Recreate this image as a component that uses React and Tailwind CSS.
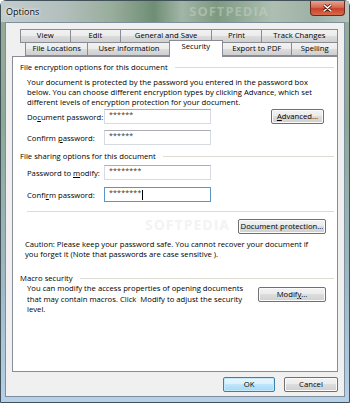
import clsx from "clsx";

const TAB_BASE =
  "flex items-center justify-center -ml-px border border-[#898c95] text-[7.7px] leading-none text-black bg-[linear-gradient(#f2f2f2,#ebebeb_50%,#dddddd_50%,#cfcfcf)]";

function Tab({ label, width, selected }) {
  if (selected) {
    return <div
      className="relative z-10 -mt-[2px] -ml-[2px] -mr-px flex h-[17px] items-start justify-center border border-b-0 border-[#898c95] bg-white pt-[2px] text-[7.7px] leading-none text-black"
      style={{ width }}
    >
        {label}
      </div>;
  }
  return <div className={clsx(TAB_BASE, "h-[14px]")} style={{ width }}>
      {label}
    </div>;
}

function Btn({ children, className, primary }) {
  return <div
    className={clsx(
      "relative z-10 flex h-[15px] items-center justify-center rounded-[2px] border text-[7.7px] leading-none text-black",
      primary
        ? "border-[#3c7fb1] bg-[linear-gradient(#eaf6fd,#d9f0fc_50%,#bee6fd_50%,#a7d9f5)] shadow-[inset_0_0_0_1px_#c9e8fa]"
        : "border-[#707070] bg-[linear-gradient(#f2f2f2,#ebebeb_50%,#dddddd_50%,#cfcfcf)] shadow-[inset_0_0_0_1px_#fbfbfb]",
      className
    )}
  >
      {children}
    </div>;
}

function GroupHeader({ children }) {
  return <div className="flex h-[10px] items-center pl-[7px] pr-[3px]">
      <span className="whitespace-nowrap leading-[10px]">{children}</span>
      <div className="ml-[7px] h-px flex-1 bg-[#dcdcd2]" />
    </div>;
}

function PasswordField({ label, value, focused }) {
  return <div className="flex h-[15px] items-center">
      <span className="w-[91px] shrink-0 pl-[14px] whitespace-nowrap leading-[10px]">{label}</span>
      <div
        className={clsx(
          "flex h-[15px] w-[107px] items-start border bg-white pl-[4px] pt-[1px]",
          focused ? "border-[#5b95c8]" : "border-[#d6dbe2] border-t-[#abadb3]"
        )}
      >
        <span className="text-[7px] leading-[7px] tracking-[0.2px] text-[#333]">{value}</span>
        {focused && <span className="ml-px mt-[1px] h-[10px] w-px bg-black" />}
      </div>
    </div>;
}

function Key({ children }) {
  return <span className="underline underline-offset-[1px]">{children}</span>;
}

export default function App() {
  return <div className="h-[403px] w-[350px] overflow-hidden font-['Open_Sans','Noto_Sans',sans-serif] text-[7.7px] text-black">
      <div className="flex h-full flex-col rounded-t-[6px] border border-[#41515a] bg-[linear-gradient(#97ac9a,#8ea896_30%,#9fb8c4_70%,#b7d0e8)]">
        {/* title bar */}
        <div className="relative flex h-[21px] shrink-0 items-center bg-[linear-gradient(to_right,#c3cdce_0%,#b2bfbc_18%,#98ad9b_32%,#6f8e74_44%,#a2b6a6_52%,#7d9a80_62%,#aebfb2_78%,#9db1a4_90%,#b7c4be_100%)] pl-[5px]">
          <span className="text-[9px] leading-none text-black [text-shadow:0_0_4px_#ffffff,0_0_2px_#ffffff]">Options</span>
          <span className="ml-[150px] text-[13px] font-bold tracking-[1px] text-[#c7d3c9]/50">SOFTPEDIA</span>
          <div className="absolute right-[4px] top-0 flex h-[15px] w-[35px] items-center justify-center rounded-b-[4px] border border-t-0 border-[#6b2a20] bg-[linear-gradient(#e8a493,#d9684f_45%,#c7422a_55%,#d86a4c)]">
            <svg width="9" height="8" viewBox="0 0 9 8">
              <path d="M1 1 L8 7 M8 1 L1 7" stroke="#4a1a12" strokeWidth="3" strokeLinecap="round" />
              <path d="M1 1 L8 7 M8 1 L1 7" stroke="#ffffff" strokeWidth="1.6" strokeLinecap="round" />
            </svg>
          </div>
        </div>

        {/* client area */}
        <div className="mx-[4px] mb-[5px] flex flex-1 flex-col border border-[#7d8f9c] bg-[#f0f0f0] px-[6px] pt-[6px]">
          {/* tabs row 1 */}
          <div className="flex pl-[9px]">
            <Tab label="View" width={51} />
            <Tab label="Edit" width={52} />
            <Tab label="General and Save" width={93} />
            <Tab label="Print" width={51} />
            <Tab label="Track Changes" width={78} />
          </div>
          {/* tabs row 2 */}
          <div className="-mt-px flex pl-[14px]">
            <Tab label="File Locations" width={64} />
            <Tab label="User information" width={84} />
            <Tab label="Security" width={55} selected />
            <Tab label="Export to PDF" width={72} />
            <Tab label="Spelling" width={47} />
          </div>

          {/* panel */}
          <div className="relative -mt-px flex h-[316px] w-[326px] flex-col border border-[#898c95] bg-white pt-[5px]">
            <span className="pointer-events-none absolute left-[132px] top-[157px] text-[14px] font-bold tracking-[1px] text-[#f3f3f3]">
              SOFTPEDIA
            </span>

            <GroupHeader>File encryption options for this document</GroupHeader>
            <p className="mt-[5px] pl-[14px] leading-[10px]">
              Your document is protected by the password you entered in the password box
              <br />
              below. You can choose different encryption types by clicking Advance, which set
              <br />
              different levels of encryption protection for your document.
            </p>
            <div className="mt-[2px] flex items-center">
              <PasswordField label={<>Do<Key>c</Key>ument password:</>} value="******" />
              <Btn className="ml-[60px] w-[53px]">
                <Key>A</Key>dvanced...
              </Btn>
            </div>
            <div className="mt-[6px]">
              <PasswordField label={<>Confirm <Key>p</Key>assword:</>} value="******" />
            </div>

            <div className="mt-[6px]">
              <GroupHeader>File sharing options for this document</GroupHeader>
            </div>
            <div className="mt-[4px]">
              <PasswordField label={<>Password to <Key>m</Key>odify:</>} value="********" />
            </div>
            <div className="mt-[7px]">
              <PasswordField label={<>Confi<Key>r</Key>m password:</>} value="********" focused />
            </div>
            <div className="ml-[14px] mr-[3px] mt-[9px] h-px bg-[#dcdcd2]" />

            <div className="mt-[7px] flex justify-end pr-[11px]">
              <Btn className="w-[88px]">Document protection...</Btn>
            </div>
            <p className="mt-[5px] pl-[12px] leading-[10px]">
              Caution: Please keep your password safe. You cannot recover your document if
              <br />
              you forget it (Note that passwords are case sensitive ).
            </p>

            <div className="mt-[14px]">
              <GroupHeader>Macro security</GroupHeader>
            </div>
            <div className="flex items-start">
              <p className="pl-[14px] leading-[10.5px]">
                You can modify the access properties of opening documents
                <br />
                that may contain macros. Click &nbsp;Modify to adjust the security
                <br />
                level.
              </p>
              <Btn className="ml-auto mr-[11px] mt-[4px] w-[68px]">
                Modif<Key>y</Key>...
              </Btn>
            </div>
          </div>

          {/* dialog buttons */}
          <div className="mt-[5px] flex justify-end gap-[9px]">
            <Btn primary className="w-[52px]">OK</Btn>
            <Btn className="w-[54px]">Cancel</Btn>
          </div>
        </div>
      </div>
    </div>;
}
